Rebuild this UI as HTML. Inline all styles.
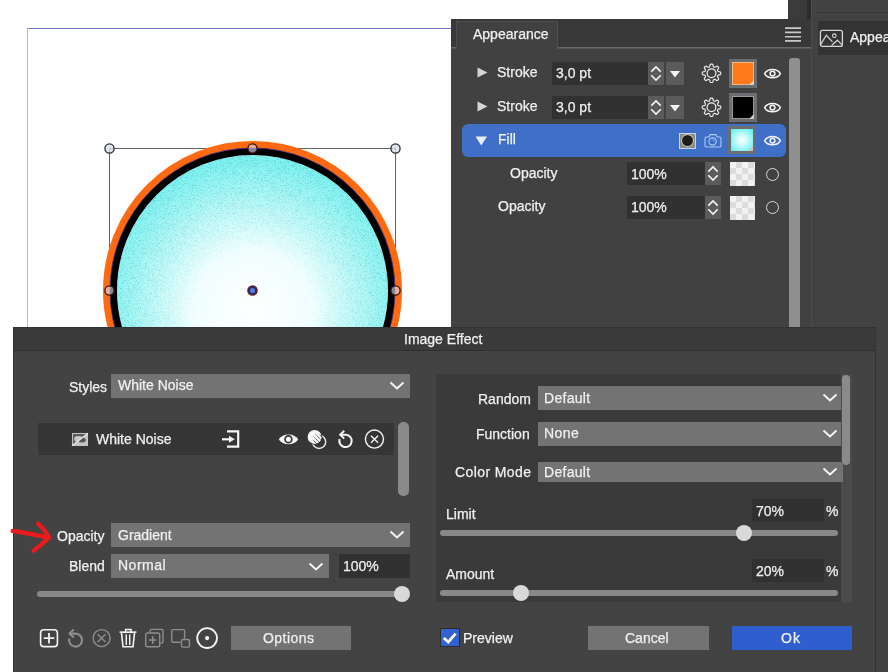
<!DOCTYPE html>
<html><head><meta charset="utf-8">
<style>
*{margin:0;padding:0;box-sizing:border-box}
html,body{width:888px;height:672px;overflow:hidden;background:#fff;font-family:"Liberation Sans",sans-serif;color:#f0f0f0;font-size:14px}
.a{position:absolute}
.t{position:absolute;white-space:nowrap;line-height:1;will-change:transform;-webkit-text-stroke:0.25px #f0f0f0}
.dd{position:absolute;background:#737373}
.inp{position:absolute;background:#313131}
.chev{position:absolute;width:14px;height:8px}
.chk{background-color:#f2f2f2;background-image:linear-gradient(45deg,#dcdcdc 25%,transparent 25%,transparent 75%,#dcdcdc 75%),linear-gradient(45deg,#dcdcdc 25%,transparent 25%,transparent 75%,#dcdcdc 75%);background-size:12px 12px;background-position:0 0,6px 6px}
</style></head><body>
<svg width="0" height="0" style="position:absolute">
<defs>
<g id="gear"><path d="M19.75 10.30 L19.74 10.59 L19.71 10.88 L19.64 11.16 L19.49 11.44 L19.15 11.67 L18.53 11.83 L17.82 11.94 L17.34 12.06 L17.09 12.22 L16.96 12.40 L16.86 12.59 L16.78 12.79 L16.70 12.98 L16.62 13.18 L16.55 13.38 L16.52 13.61 L16.58 13.89 L16.83 14.32 L17.26 14.90 L17.59 15.45 L17.66 15.85 L17.57 16.15 L17.42 16.40 L17.24 16.63 L17.04 16.84 L16.83 17.04 L16.60 17.22 L16.35 17.37 L16.05 17.46 L15.65 17.39 L15.10 17.06 L14.52 16.63 L14.09 16.38 L13.81 16.32 L13.58 16.35 L13.38 16.42 L13.18 16.50 L12.99 16.58 L12.79 16.66 L12.60 16.76 L12.42 16.89 L12.26 17.14 L12.14 17.62 L12.03 18.33 L11.87 18.95 L11.64 19.29 L11.36 19.44 L11.08 19.51 L10.79 19.54 L10.50 19.55 L10.21 19.54 L9.92 19.51 L9.64 19.44 L9.36 19.29 L9.13 18.95 L8.97 18.33 L8.86 17.62 L8.74 17.14 L8.58 16.89 L8.40 16.76 L8.21 16.66 L8.01 16.58 L7.82 16.50 L7.62 16.42 L7.42 16.35 L7.19 16.32 L6.91 16.38 L6.48 16.63 L5.90 17.06 L5.35 17.39 L4.95 17.46 L4.65 17.37 L4.40 17.22 L4.17 17.04 L3.96 16.84 L3.76 16.63 L3.58 16.40 L3.43 16.15 L3.34 15.85 L3.41 15.45 L3.74 14.90 L4.17 14.32 L4.42 13.89 L4.48 13.61 L4.45 13.38 L4.38 13.18 L4.30 12.98 L4.22 12.79 L4.14 12.59 L4.04 12.40 L3.91 12.22 L3.66 12.06 L3.18 11.94 L2.47 11.83 L1.85 11.67 L1.51 11.44 L1.36 11.16 L1.29 10.88 L1.26 10.59 L1.25 10.30 L1.26 10.01 L1.29 9.72 L1.36 9.44 L1.51 9.16 L1.85 8.93 L2.47 8.77 L3.18 8.66 L3.66 8.54 L3.91 8.38 L4.04 8.20 L4.14 8.01 L4.22 7.81 L4.30 7.62 L4.38 7.42 L4.45 7.22 L4.48 6.99 L4.42 6.71 L4.17 6.28 L3.74 5.70 L3.41 5.15 L3.34 4.75 L3.43 4.45 L3.58 4.20 L3.76 3.97 L3.96 3.76 L4.17 3.56 L4.40 3.38 L4.65 3.23 L4.95 3.14 L5.35 3.21 L5.90 3.54 L6.48 3.97 L6.91 4.22 L7.19 4.28 L7.42 4.25 L7.62 4.18 L7.82 4.10 L8.01 4.02 L8.21 3.94 L8.40 3.84 L8.58 3.71 L8.74 3.46 L8.86 2.98 L8.97 2.27 L9.13 1.65 L9.36 1.31 L9.64 1.16 L9.92 1.09 L10.21 1.06 L10.50 1.05 L10.79 1.06 L11.08 1.09 L11.36 1.16 L11.64 1.31 L11.87 1.65 L12.03 2.27 L12.14 2.98 L12.26 3.46 L12.42 3.71 L12.60 3.84 L12.79 3.94 L12.99 4.02 L13.18 4.10 L13.38 4.18 L13.58 4.25 L13.81 4.28 L14.09 4.22 L14.52 3.97 L15.10 3.54 L15.65 3.21 L16.05 3.14 L16.35 3.23 L16.60 3.38 L16.83 3.56 L17.04 3.76 L17.24 3.97 L17.42 4.20 L17.57 4.45 L17.66 4.75 L17.59 5.15 L17.26 5.70 L16.83 6.28 L16.58 6.71 L16.52 6.99 L16.55 7.22 L16.62 7.42 L16.70 7.62 L16.78 7.81 L16.86 8.01 L16.96 8.20 L17.09 8.38 L17.34 8.54 L17.82 8.66 L18.53 8.77 L19.15 8.93 L19.49 9.16 L19.64 9.44 L19.71 9.72 L19.74 10.01Z" fill="none" stroke="#f0f0f0" stroke-width="1.15" stroke-linejoin="round"/><circle cx="10.5" cy="10.3" r="4.4" fill="none" stroke="#f0f0f0" stroke-width="1.2"/></g>
<g id="eye"><path d="M2.6 8.6 C5.5 3 15.5 3 18.4 8.6 C15.5 14.2 5.5 14.2 2.6 8.6Z" fill="none" stroke="#f4f4f4" stroke-width="1.45" stroke-linejoin="miter"/><circle cx="10.5" cy="8.6" r="2.4" fill="none" stroke="#f4f4f4" stroke-width="1.5"/></g>
<g id="chev"><path d="M1.5 1.5 L8 7.5 L14.5 1.5" fill="none" stroke="#f4f4f4" stroke-width="2"/></g>
</defs></svg>

<!-- canvas guide -->
<div class="a" style="left:27px;top:28px;width:500px;height:400px;border-left:1px solid #b2b2f2;border-top:1px solid #7676c6"></div>
<!-- circle -->
<svg class="a" style="left:0;top:0" width="451" height="327">
<defs>
<radialGradient id="rg" cx="253" cy="310" r="150" gradientUnits="userSpaceOnUse">
<stop offset="0" stop-color="#ffffff"/><stop offset="0.4" stop-color="#f2fefe"/><stop offset="0.72" stop-color="#b6f7f6"/><stop offset="1" stop-color="#80f2f0"/>
</radialGradient>
<filter id="nz" x="0" y="0" width="100%" height="100%" color-interpolation-filters="sRGB">
<feTurbulence type="fractalNoise" baseFrequency="1.6" numOctaves="1" seed="7" result="t"/>
<feColorMatrix in="t" type="matrix" values="0 0 0 0 0.36  0 0 0 0 0.8  0 0 0 0 0.82  0 0 0 -3.5 1.7" result="m"/>
<feColorMatrix in="SourceGraphic" type="matrix" values="0 0 0 0 0  0 0 0 0 0  0 0 0 0 0  -2 0 0 2 0" result="s"/>
<feComposite in="m" in2="s" operator="in" result="c"/>
<feMerge><feMergeNode in="SourceGraphic"/><feMergeNode in="c"/></feMerge>
</filter>
</defs>
<rect x="109.5" y="148.5" width="286" height="286" fill="none" stroke="#646464" stroke-width="1"/>
<circle cx="252.5" cy="290.5" r="135.5" fill="url(#rg)" filter="url(#nz)"/>
<circle cx="252.5" cy="290.5" r="146" fill="none" stroke="#ff6a10" stroke-width="7"/>
<circle cx="252.5" cy="290.5" r="139" fill="none" stroke="#000" stroke-width="7"/>
<circle cx="252.5" cy="290.5" r="142.5" fill="none" stroke="#402080" stroke-width="1" opacity="0.8"/>
<g fill="rgba(215,222,238,0.75)" stroke="#2a2a34" stroke-width="1.3">
<circle cx="109.5" cy="148.5" r="4.6"/><circle cx="395.5" cy="148.5" r="4.6"/>
</g>
<g fill="rgba(215,222,238,0.6)" stroke="#3a1010" stroke-width="1.3">
<circle cx="252.5" cy="148.5" r="4.6"/><circle cx="109.5" cy="290.5" r="4.6"/><circle cx="395.5" cy="290.5" r="4.6"/>
</g>
<circle cx="252.5" cy="290.5" r="4.6" fill="#202a70" stroke="#6a2020" stroke-width="1.4"/>
<circle cx="252.5" cy="290.5" r="2.6" fill="#4a82e0"/>
</svg>

<!-- top right dark strips -->
<div class="a" style="left:788px;top:0;width:19px;height:19px;background:#3b3b3b"></div>
<div class="a" style="left:807px;top:0;width:4px;height:19px;background:#2c2c2c"></div>

<!-- Appearance panel -->
<div class="a" style="left:451px;top:19px;width:360px;height:308px;background:#414141"></div>
<div class="a" style="left:451px;top:19px;width:360px;height:28px;background:#383838"></div>
<div class="a" style="left:451px;top:47px;width:360px;height:1px;background:#6a6a6a"></div><div class="a" style="left:451px;top:48px;width:360px;height:1px;background:#555"></div>
<div class="a" style="left:456px;top:21px;width:102px;height:28px;background:#414141;border:1px solid #4e4e4e;border-bottom:none"></div>
<div class="t" style="left:473px;top:27.4px;font-size:14px">Appearance</div>


<!-- appearance rows -->
<div class="a" style="left:789px;top:58px;width:11px;height:270px;background:#8f8f8f;border-radius:3px 3px 0 0"></div>
<!-- row1 -->
<svg class="a" style="left:477px;top:67px" width="11" height="11"><path d="M0.5 0.5 L10.5 5.5 L0.5 10.5Z" fill="#d4d4d4"/></svg>
<div class="t" style="left:497px;top:65.4px">Stroke</div>
<div class="inp" style="left:552px;top:62px;width:96px;height:23px"></div>
<div class="t" style="left:556px;top:66.4px">3,0 pt</div>
<div class="a" style="left:648px;top:62px;width:16px;height:23px;background:#5b5b5b"></div>
<svg class="a" style="left:648px;top:62px" width="16" height="23"><path d="M3.3 9.6 L8 4.9 L12.7 9.6 M3.3 13.3 L8 18 L12.7 13.3" fill="none" stroke="#f4f4f4" stroke-width="1.6"/></svg>
<div class="a" style="left:666px;top:62px;width:18px;height:23px;background:#5b5b5b"></div>
<svg class="a" style="left:666px;top:62px" width="18" height="23"><path d="M4 9 L14 9 L9 15.5Z" fill="#f4f4f4"/></svg>
<svg class="a gear" style="left:701px;top:63px" width="21" height="21"><use href="#gear"/></svg>
<div class="a" style="left:729px;top:59px;width:28px;height:29px;background:#6a6d71"></div>
<div class="a" style="left:732px;top:62px;width:22px;height:23px;background:#ff7a1a;border:1px solid #f0b888"></div>
<svg class="a" style="left:749px;top:80px" width="5" height="5"><path d="M5 0 L5 5 L0 5Z" fill="#d8d0c8"/></svg>
<svg class="a" style="left:762px;top:65px" width="21" height="17"><use href="#eye"/></svg>
<!-- row2 -->
<svg class="a" style="left:477px;top:101px" width="11" height="11"><path d="M0.5 0.5 L10.5 5.5 L0.5 10.5Z" fill="#d4d4d4"/></svg>
<div class="t" style="left:497px;top:99.4px">Stroke</div>
<div class="inp" style="left:552px;top:96px;width:96px;height:23px"></div>
<div class="t" style="left:556px;top:100.4px">3,0 pt</div>
<div class="a" style="left:648px;top:96px;width:16px;height:23px;background:#5b5b5b"></div>
<svg class="a" style="left:648px;top:96px" width="16" height="23"><path d="M3.3 9.6 L8 4.9 L12.7 9.6 M3.3 13.3 L8 18 L12.7 13.3" fill="none" stroke="#f4f4f4" stroke-width="1.6"/></svg>
<div class="a" style="left:666px;top:96px;width:18px;height:23px;background:#5b5b5b"></div>
<svg class="a" style="left:666px;top:96px" width="18" height="23"><path d="M4 9 L14 9 L9 15.5Z" fill="#f4f4f4"/></svg>
<svg class="a" style="left:701px;top:97px" width="21" height="21"><use href="#gear"/></svg>
<div class="a" style="left:729px;top:93px;width:28px;height:29px;background:#6a6d71"></div>
<div class="a" style="left:732px;top:96px;width:22px;height:23px;background:#000;border:1px solid #999"></div>
<svg class="a" style="left:749px;top:114px" width="5" height="5"><path d="M5 0 L5 5 L0 5Z" fill="#c8c8c8"/></svg>
<svg class="a" style="left:762px;top:99px" width="21" height="17"><use href="#eye"/></svg>
<!-- fill row -->
<div class="a" style="left:462px;top:124px;width:324px;height:33px;background:#3f6fc6;border-radius:6px"></div>
<svg class="a" style="left:475px;top:136px" width="13" height="10"><path d="M0.5 0.5 L12 0.5 L6.25 9.5Z" fill="#e8ecf4"/></svg>
<div class="t" style="left:498px;top:132.4px">Fill</div>
<div class="a" style="left:679px;top:133px;width:17px;height:16px;background:#8c8c86;border:1px solid #c4d6f4"></div>
<div class="a" style="left:682px;top:135px;width:11px;height:11px;background:#1e1e1e;border-radius:50%;box-shadow:0 0 0 0.7px #e8e0d0"></div>
<svg class="a" style="left:703px;top:133px" width="20" height="16"><path d="M3.2 4 H6 L7 1.6 H13 L14 4 H16.8 Q18 4 18 5.2 V12.8 Q18 14 16.8 14 H3.2 Q2 14 2 12.8 V5.2 Q2 4 3.2 4Z" fill="none" stroke="#b0ccf4" stroke-width="1.1" stroke-linejoin="round"/><circle cx="9.6" cy="8.5" r="3.6" fill="none" stroke="#b0ccf4" stroke-width="1.1"/><path d="M9.8 6.6 L11.4 8.3" stroke="#b0ccf4" stroke-width="0.9"/></svg>
<div class="a" style="left:728px;top:126px;width:28px;height:28px;background:#6e6e6e"></div>
<div class="a" style="left:731px;top:129px;width:22px;height:22px;background:radial-gradient(circle at 50% 50%,#ffffff 0%,#c8fafa 35%,#4ff0ee 100%)"></div>
<svg class="a" style="left:748px;top:146px" width="5" height="5"><path d="M5 0 L5 5 L0 5Z" fill="#c8c8c8"/></svg>
<svg class="a" style="left:762px;top:132px" width="21" height="17"><use href="#eye"/></svg>
<!-- opacity rows -->
<div class="t" style="left:510px;top:166.4px">Opacity</div>
<div class="inp" style="left:627px;top:162px;width:78px;height:23px"></div>
<div class="t" style="left:631px;top:167.4px">100%</div>
<div class="a" style="left:705px;top:162px;width:16px;height:23px;background:#5b5b5b"></div>
<svg class="a" style="left:705px;top:162px" width="16" height="23"><path d="M3.3 9.6 L8 4.9 L12.7 9.6 M3.3 13.3 L8 18 L12.7 13.3" fill="none" stroke="#f4f4f4" stroke-width="1.6"/></svg>
<div class="a chk" style="left:730px;top:162px;width:25px;height:24px"></div>
<div class="a" style="left:766px;top:168px;width:13px;height:13px;border:1px solid #d8d8d8;border-radius:50%"></div>
<div class="t" style="left:498px;top:199.4px">Opacity</div>
<div class="inp" style="left:627px;top:196px;width:78px;height:23px"></div>
<div class="t" style="left:631px;top:200.4px">100%</div>
<div class="a" style="left:705px;top:196px;width:16px;height:23px;background:#5b5b5b"></div>
<svg class="a" style="left:705px;top:196px" width="16" height="23"><path d="M3.3 9.6 L8 4.9 L12.7 9.6 M3.3 13.3 L8 18 L12.7 13.3" fill="none" stroke="#f4f4f4" stroke-width="1.6"/></svg>
<div class="a chk" style="left:730px;top:196px;width:25px;height:24px"></div>
<div class="a" style="left:766px;top:201px;width:13px;height:13px;border:1px solid #d8d8d8;border-radius:50%"></div>
<!-- hamburger -->
<svg class="a" style="left:785px;top:26px" width="16" height="17"><g stroke="#c8c8c8" stroke-width="1.6"><path d="M0 2.1H16M0 6.4H16M0 10.7H16M0 14.9H16"/></g></svg>

<!-- right panel -->
<div class="a" style="left:811px;top:0;width:77px;height:672px;background:#424242;border-left:1px solid #4c4c4c"></div>
<div class="a" style="left:816px;top:12px;width:72px;height:1px;background:#383838"></div>
<div class="a" style="left:818px;top:21px;width:70px;height:34px;background:#333"></div>
<svg class="a" style="left:819px;top:29px" width="25" height="19"><rect x="1.4" y="1.4" width="22" height="16" rx="2" fill="none" stroke="#d6d6d6" stroke-width="1.3"/><path d="M1.6 15.6 L7.3 6.3 L13.5 12.8 M12.6 16.5 L18.4 11.2 L22.6 15.6" fill="none" stroke="#d6d6d6" stroke-width="1.2"/><circle cx="15.3" cy="6.7" r="1.8" fill="none" stroke="#d6d6d6" stroke-width="1.1"/></svg>
<div class="t" style="left:850px;top:30.4px;font-size:14px">Appearance</div>

<!-- Dialog -->
<div class="a" style="left:13px;top:327px;width:863px;height:345px;background:#434343;border:1px solid #333;border-bottom:none"></div>
<div class="a" style="left:13px;top:327px;width:863px;height:24px;background:#3a3a3a;border:1px solid #333;border-bottom:1px solid #2f2f2f"></div>
<div class="t" style="left:404px;top:332.4px">Image Effect</div>


<!-- dialog left -->
<div class="t" style="left:69px;top:380.4px">Styles</div>
<div class="dd" style="left:111px;top:374px;width:299px;height:24px"></div>
<div class="t" style="left:118px;top:378.4px">White Noise</div>
<svg class="a" style="left:389px;top:381px" width="16" height="10"><use href="#chev"/></svg>

<div class="a" style="left:38px;top:423px;width:356px;height:32px;background:#363636"></div>
<div class="a" style="left:398px;top:422px;width:11px;height:74px;background:#8a8a8a;border-radius:5px"></div>
<div class="t" style="left:96px;top:432.4px">White Noise</div>

<div class="t" style="left:57px;top:529.4px">Opacity</div>
<div class="dd" style="left:111px;top:523px;width:299px;height:24px"></div>
<div class="t" style="left:118px;top:528.4px">Gradient</div>
<svg class="a" style="left:389px;top:530px" width="16" height="10"><use href="#chev"/></svg>

<div class="t" style="left:69px;top:559.4px">Blend</div>
<div class="dd" style="left:111px;top:554px;width:218px;height:24px"></div>
<div class="t" style="left:118px;top:558.4px;letter-spacing:0.5px">Normal</div>
<svg class="a" style="left:308px;top:562px" width="16" height="10"><use href="#chev"/></svg>
<div class="inp" style="left:339px;top:554px;width:71px;height:24px"></div>
<div class="t" style="left:343px;top:559.4px">100%</div>

<div class="a" style="left:37px;top:591px;width:366px;height:6px;background:#888;border-radius:3px"></div>
<div class="a" style="left:394px;top:586px;width:16px;height:16px;background:#d9d9d9;border-radius:50%"></div>

<svg class="a" style="left:0;top:510px" width="60" height="50"><path d="M12.8 21 C22 22 36 25 48.5 27.6" fill="none" stroke="#ea1a1e" stroke-width="4.6" stroke-linecap="round"/><path d="M38.2 13.6 C42 17 46 22 49 27.5 C44 32.5 38 37 33.8 40.6" fill="none" stroke="#ea1a1e" stroke-width="4.4" stroke-linecap="round" stroke-linejoin="round"/></svg>

<!-- bottom toolbar -->
<svg class="a" style="left:0;top:0" width="888" height="672">
<rect x="40.6" y="629.8" width="16.8" height="16.8" rx="3.2" fill="none" stroke="#f4f4f4" stroke-width="1.6"/>
<path d="M49 633 V643.5 M43.8 638.2 H54.3" stroke="#f4f4f4" stroke-width="1.8"/>
<path d="M69.2 638.6 A6.5 6.5 0 1 0 75.6 633.6 H70.5" fill="none" stroke="#8e8e8e" stroke-width="2.1"/>
<path d="M73.8 629.6 L69.6 633.6 L73.8 637.6" fill="none" stroke="#8e8e8e" stroke-width="2.1"/>
<circle cx="101.6" cy="638.1" r="8.5" fill="none" stroke="#8e8e8e" stroke-width="1.4"/>
<path d="M97.7 634.2 L105.5 642 M105.5 634.2 L97.7 642" stroke="#8e8e8e" stroke-width="1.4"/>
<path d="M119.6 632.2 H136.4" stroke="#f4f4f4" stroke-width="1.7"/>
<path d="M125.6 632 V629.6 H131 V632" fill="none" stroke="#f4f4f4" stroke-width="1.5"/>
<path d="M121.5 633 L123 646.8 H133 L134.5 633" fill="none" stroke="#f4f4f4" stroke-width="1.6"/>
<path d="M126.3 634.5 V645 M129.7 634.5 V645" stroke="#f4f4f4" stroke-width="1.4"/>
<path d="M150 632 V631 Q150 629.4 151.6 629.4 H161.5 Q163 629.4 163 631 V641.2 Q163 643 161.4 643 H160.5" fill="none" stroke="#8e8e8e" stroke-width="1.4"/>
<rect x="145.7" y="633" width="14" height="13.8" rx="1.8" fill="none" stroke="#8e8e8e" stroke-width="1.4"/>
<path d="M152.7 636.2 V643.8 M148.9 640 H156.5" stroke="#8e8e8e" stroke-width="1.6"/>
<path d="M180.3 642.2 H173 Q171.8 642.2 171.8 641 V630.8 Q171.8 629.6 173 629.6 H183.4 Q184.6 629.6 184.6 630.8 V638.6" fill="none" stroke="#8e8e8e" stroke-width="1.4"/>
<rect x="181.5" y="639.5" width="8" height="7.6" rx="1.5" fill="none" stroke="#8e8e8e" stroke-width="1.4"/>
<circle cx="207.1" cy="638.1" r="9.9" fill="none" stroke="#f4f4f4" stroke-width="1.8"/>
<circle cx="207.1" cy="638.1" r="2.1" fill="#f4f4f4"/>
</svg>
<div class="a" style="left:231px;top:626px;width:120px;height:24px;background:#737373"></div>
<div class="t" style="left:263px;top:631.4px;letter-spacing:0.45px">Options</div>

<!-- dialog right panel -->
<div class="a" style="left:436px;top:374px;width:405px;height:228px;background:#3a3a3a"></div>
<div class="a" style="left:841px;top:374px;width:11px;height:228px;background:#4b4b4b"></div>
<div class="a" style="left:842px;top:375px;width:8px;height:90px;background:#8a8a8a;border-radius:4px"></div>

<div class="t" style="left:478px;top:392.4px">Random</div>
<div class="dd" style="left:538px;top:386px;width:303px;height:24px"></div>
<div class="t" style="left:544px;top:391.4px;letter-spacing:0.3px">Default</div>
<svg class="a" style="left:822px;top:393px" width="16" height="10"><use href="#chev"/></svg>

<div class="t" style="left:476px;top:427.4px">Function</div>
<div class="dd" style="left:538px;top:422px;width:303px;height:24px"></div>
<div class="t" style="left:544px;top:426.4px;letter-spacing:0.4px">None</div>
<svg class="a" style="left:822px;top:429px" width="16" height="10"><use href="#chev"/></svg>

<div class="t" style="left:455px;top:465.4px;letter-spacing:0.4px">Color Mode</div>
<div class="dd" style="left:538px;top:462px;width:305px;height:20px"></div>
<div class="t" style="left:544px;top:465.4px;letter-spacing:0.3px">Default</div>
<svg class="a" style="left:822px;top:467px" width="16" height="10"><use href="#chev"/></svg>

<div class="t" style="left:446px;top:507.4px">Limit</div>
<div class="inp" style="left:752px;top:499px;width:72px;height:23px"></div>
<div class="t" style="left:756px;top:504.4px">70%</div>
<div class="t" style="left:826px;top:504.4px">%</div>
<div class="a" style="left:440px;top:530px;width:398px;height:6px;background:#888;border-radius:3px"></div>
<div class="a" style="left:736px;top:525px;width:16px;height:16px;background:#d9d9d9;border-radius:50%"></div>

<div class="t" style="left:446px;top:567.4px">Amount</div>
<div class="inp" style="left:752px;top:559px;width:72px;height:23px"></div>
<div class="t" style="left:756px;top:564.4px">20%</div>
<div class="t" style="left:826px;top:564.4px">%</div>
<div class="a" style="left:440px;top:590px;width:398px;height:6px;background:#888;border-radius:3px"></div>
<div class="a" style="left:513px;top:585px;width:16px;height:16px;background:#d9d9d9;border-radius:50%"></div>

<!-- bottom buttons -->
<div class="a" style="left:440px;top:628px;width:20px;height:19px;background:#3262d2;border:1px solid #2a2a2a"></div>
<svg class="a" style="left:440px;top:628px" width="20" height="19"><path d="M3.8 10 L8.3 14 L15.6 5.6" fill="none" stroke="#fff" stroke-width="2.7"/></svg>
<div class="t" style="left:463px;top:631.4px">Preview</div>
<div class="a" style="left:588px;top:626px;width:121px;height:24px;background:#737373"></div>
<div class="t" style="left:625px;top:631.4px">Cancel</div>
<div class="a" style="left:732px;top:626px;width:120px;height:24px;background:#2f5fcf"></div>
<div class="t" style="left:781px;top:631.4px;letter-spacing:1px">Ok</div>

<!-- list row icons overlay -->
<svg class="a" style="left:0;top:0" width="888" height="672">
<defs><clipPath id="mclip"><circle cx="314.6" cy="436.9" r="7"/></clipPath><clipPath id="hclip"><circle cx="317.8" cy="439" r="5"/></clipPath>
<clipPath id="ulc"><path d="M72 433 H88 L72 446Z"/></clipPath><clipPath id="lrc"><path d="M88 433 V446 H72Z"/></clipPath></defs>
<rect x="72" y="433" width="16" height="13" fill="#c4c4c4"/>
<rect x="73" y="434" width="14" height="11" fill="#5c5c5c" clip-path="url(#ulc)"/>
<ellipse cx="78.5" cy="439" rx="4.5" ry="3" fill="#c8c8c8" clip-path="url(#ulc)"/>
<ellipse cx="82" cy="440" rx="3.8" ry="2.5" fill="#565656" clip-path="url(#lrc)"/>
<path d="M72 445.8 L88 433.2" stroke="#e8e8e8" stroke-width="1.2"/>
<!-- import -->
<path d="M227 431.4 H238.2 V446.7 H227" fill="none" stroke="#f6f6f6" stroke-width="2.2"/>
<path d="M222 439.3 H230" stroke="#f6f6f6" stroke-width="2.2"/>
<path d="M229 435.8 L234.8 439.3 L229 442.8Z" fill="#f6f6f6"/>
<!-- eye filled -->
<path d="M278.8 439.4 C282.5 433 294.5 433 298.2 439.4 C294.5 445.8 282.5 445.8 278.8 439.4Z" fill="#f6f6f6"/>
<circle cx="288.4" cy="439.2" r="3.4" fill="none" stroke="#363636" stroke-width="1.7"/>
<!-- mask -->
<circle cx="319.1" cy="441.9" r="6.6" fill="none" stroke="#ececec" stroke-width="1.4"/>
<circle cx="314.6" cy="436.9" r="7.8" fill="#363636"/>
<circle cx="314.6" cy="436.9" r="7" fill="#f6f6f6"/>
<g clip-path="url(#hclip)" stroke="#2e2e2e" stroke-width="1" stroke-dasharray="1.1 0.8">
<path d="M308 431 L326 449 M310 429 L328 447 M312 427 L330 445 M306 433 L324 451 M304 435 L322 453 M314 425 L332 443"/>
</g>
<!-- reset -->
<path d="M339.6 439 A6.2 6.2 0 1 0 345.8 434.7 H341" fill="none" stroke="#f6f6f6" stroke-width="2"/>
<path d="M344.2 430.8 L340.2 434.7 L344.2 438.6" fill="none" stroke="#f6f6f6" stroke-width="2" stroke-linejoin="miter"/>
<!-- x circle -->
<circle cx="374.45" cy="439.1" r="9.05" fill="none" stroke="#f6f6f6" stroke-width="1.4"/>
<path d="M371 435.7 L378.1 442.8 M378.1 435.7 L371 442.8" stroke="#f6f6f6" stroke-width="1.4"/>
</svg>
</body></html>
